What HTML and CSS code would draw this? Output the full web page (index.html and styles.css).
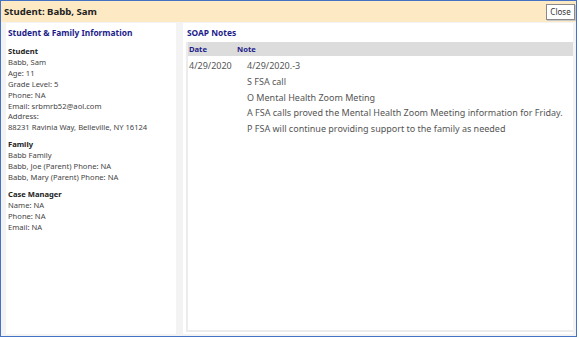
FILE: index.html
```html
<!DOCTYPE html>
<html lang="en">
<head>
  <meta charset="UTF-8" />
  <title>Student: Babb, Sam</title>
  <link rel="stylesheet" href="styles.css">
</head>
<body>
  <div class="dialog">
    <div class="dialog-header">
      <div class="dialog-title">Student: Babb, Sam</div>
      <button class="close-btn">Close</button>
    </div>

    <div class="dialog-body">
      <div class="panel info-panel">
        <h2>Student &amp; Family Information</h2>

        <div class="info-group">
          <h3>Student</h3>
          <p>Babb, Sam</p>
          <p>Age: 11</p>
          <p>Grade Level: 5</p>
          <p>Phone: NA</p>
          <p>Email: srbmrb52@aol.com</p>
          <p>Address:</p>
          <p>88231 Ravinia Way, Belleville, NY 16124</p>
        </div>

        <div class="info-group">
          <h3>Family</h3>
          <p>Babb Family</p>
          <p>Babb, Joe (Parent) Phone: NA</p>
          <p>Babb, Mary (Parent) Phone: NA</p>
        </div>

        <div class="info-group">
          <h3>Case Manager</h3>
          <p>Name: NA</p>
          <p>Phone: NA</p>
          <p>Email: NA</p>
        </div>
      </div>

      <div class="panel notes-panel">
        <h2>SOAP Notes</h2>
        <div class="notes-box">
          <div class="notes-head">
            <span>Date</span>
            <span>Note</span>
          </div>
          <div class="notes-row">
            <div class="note-date">4/29/2020</div>
            <div class="note-text">
              <p>4/29/2020.-3</p>
              <p>S FSA call</p>
              <p>O Mental Health Zoom Meting</p>
              <p>A FSA calls proved the Mental Health Zoom Meeting information for Friday.</p>
              <p>P FSA will continue providing support to the family as needed</p>
            </div>
          </div>
        </div>
      </div>
    </div>
  </div>
</body>
</html>
```

FILE: styles.css
```css
* {
  margin: 0;
  padding: 0;
  box-sizing: border-box;
  font-family: 'Noto Sans', 'Open Sans', sans-serif;
}

body {
  background: #fff;
}

.dialog {
  width: 577px;
  height: 337px;
  border: 1px solid #4472c4;
  display: flex;
  flex-direction: column;
}

.dialog-header {
  height: 21px;
  background-color: #fde9c3;
  display: flex;
  justify-content: space-between;
  align-items: center;
  padding: 0 1px 0 3px;
}

.dialog-title {
  font-size: 9.6px;
  font-weight: bold;
  color: #222;
}

.close-btn {
  width: 29px;
  height: 16px;
  font-size: 8px;
  color: #333;
  background: #fff;
  border: 1px solid #8a8a8a;
  box-shadow: 1px 1px 0 #c8c8c8;
  cursor: pointer;
}

.dialog-body {
  flex: 1;
  background-color: #f3f3f3;
  display: flex;
  gap: 7px;
  padding: 1px 3px 2px 5px;
}

.panel {
  background-color: #fff;
}

.panel h2 {
  font-size: 8.4px;
  font-weight: bold;
  color: #1c1c8a;
}

.info-panel {
  width: 170px;
  padding: 4px 2px;
}

.info-panel h2 {
  height: 14px;
  line-height: 12px;
  margin-bottom: 5px;
}

.info-group {
  margin-bottom: 6px;
  font-size: 7.6px;
  line-height: 10.9px;
}

.info-group h3 {
  font-size: 7.6px;
  font-weight: bold;
  color: #222;
}

.info-group p {
  color: #444;
}

.notes-panel {
  flex: 1;
  padding: 3px 0 2px 3px;
  display: flex;
  flex-direction: column;
}

.notes-panel h2 {
  padding-left: 1px;
  height: 16px;
  line-height: 14px;
}

.notes-box {
  flex: 1;
  border: 2px solid #ececec;
  border-top: none;
  border-right: none;
}

.notes-head {
  height: 14px;
  background-color: #dcdcdc;
  display: flex;
  align-items: center;
  font-size: 7.6px;
  font-weight: bold;
  color: #1c1c8a;
  padding-left: 1px;
}

.notes-head span:first-child {
  width: 48px;
}

.notes-row {
  display: flex;
  padding: 2px 0 0 1px;
  font-size: 9px;
  line-height: 15.8px;
  color: #555;
}

.note-date {
  width: 58px;
}
```
